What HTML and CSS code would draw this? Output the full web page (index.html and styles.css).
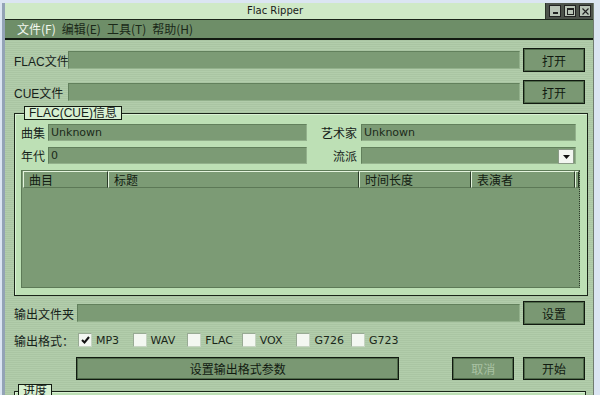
FILE: index.html
```html
<!DOCTYPE html>
<html>

<head>
  <title>Flac Ripper</title>
  <link rel="stylesheet" href="styles.css">
</head>

<body>
  <div class="window">
    <div class="titlebar">
      <div class="title">Flac Ripper</div>
      <div class="caption">
        <span class="cap-btn"><svg width="9" height="9" viewBox="0 0 9 9"><rect x="2" y="5" width="5" height="2" fill="#222"/></svg></span>
        <span class="cap-btn"><svg width="9" height="9" viewBox="0 0 9 9"><rect x="1.5" y="1.5" width="6" height="6" fill="none" stroke="#222" stroke-width="1"/><rect x="1.5" y="1.5" width="6" height="1.5" fill="#222"/></svg></span>
        <span class="cap-btn"><svg width="9" height="9" viewBox="0 0 9 9"><path d="M1.5 1.5 L7.5 7.5 M7.5 1.5 L1.5 7.5" stroke="#222" stroke-width="1.2"/></svg></span>
      </div>
    </div>

    <div class="menubar">
      <span class="menu-item active">文件(F)</span>
      <span class="menu-item">编辑(E)</span>
      <span class="menu-item">工具(T)</span>
      <span class="menu-item">帮助(H)</span>
    </div>

    <div class="client">
      <div class="row">
        <span class="lbl lbl-file">FLAC文件</span>
        <div class="field"></div>
        <button class="btn">打开</button>
      </div>

      <div class="row row-gap">
        <span class="lbl lbl-file">CUE文件</span>
        <div class="field"></div>
        <button class="btn">打开</button>
      </div>

      <fieldset class="group">
        <legend class="group-title">FLAC(CUE)信息</legend>
        <div class="info-grid">
          <span class="info-lbl">曲集</span>
          <div class="field small">Unknown</div>
          <span class="info-lbl right">艺术家</span>
          <div class="field small">Unknown</div>

          <span class="info-lbl">年代</span>
          <div class="field small">0</div>
          <span class="info-lbl right">流派</span>
          <div class="field small combo">
            <span class="combo-btn"><svg width="7" height="4" viewBox="0 0 7 4"><path d="M0 0 L7 0 L3.5 4 Z" fill="#111"/></svg></span>
          </div>
        </div>

        <div class="list">
          <div class="list-head">
            <span class="col col-1">曲目</span>
            <span class="col col-2">标题</span>
            <span class="col col-3">时间长度</span>
            <span class="col col-4">表演者</span>
            <span class="col col-5"></span>
          </div>
        </div>
      </fieldset>

      <div class="row row-out">
        <span class="lbl lbl-out">输出文件夹</span>
        <div class="field"></div>
        <button class="btn">设置</button>
      </div>

      <div class="formats">
        <span class="lbl lbl-fmt">输出格式：</span>
        <span class="fmt"><span class="check checked"><svg width="9" height="8" viewBox="0 0 9 8"><path d="M1 4 L3.5 6.5 L8 1" fill="none" stroke="#111" stroke-width="2"/></svg></span>MP3</span>
        <span class="fmt"><span class="check"></span>WAV</span>
        <span class="fmt"><span class="check"></span>FLAC</span>
        <span class="fmt"><span class="check"></span>VOX</span>
        <span class="fmt"><span class="check"></span>G726</span>
        <span class="fmt"><span class="check"></span>G723</span>
      </div>

      <div class="actions">
        <button class="btn btn-wide">设置输出格式参数</button>
        <button class="btn btn-cancel" disabled>取消</button>
        <button class="btn btn-start">开始</button>
      </div>

      <fieldset class="group progress">
        <legend class="group-title">进度</legend>
      </fieldset>
    </div>
  </div>
</body>

</html>
```

FILE: styles.css
```css
body{
    margin: 0;
    background-color: #dbe5f2;
    font-family: "Liberation Sans", "Noto Sans CJK SC", sans-serif;
    font-size: 12px;
    color: #16221a;
    overflow: hidden;
}

.window{
    margin-left: 2px;
    margin-top: 3px;
    width: 588px;
    height: 392px;
    border-left: 3px solid #93a3b6;
    border-right: 1px solid #707c70;
    background: repeating-linear-gradient(#b2cdab 0 1px, #aac5a3 1px 2px);
    overflow: hidden;
}

.titlebar{
    display: flex;
    height: 16px;
    border-bottom: 1px solid #1c261b;
}

.title{
    flex: 1;
    background-color: #cfe9c7;
    border-right: 1px solid #2a3328;
    text-align: center;
    font-family: "DejaVu Sans", sans-serif;
    font-size: 10px;
    line-height: 16px;
    color: #1a1a1a;
}

.caption{
    display: flex;
    align-items: center;
    gap: 3px;
    width: 44px;
    padding-left: 3px;
    background-color: #4d534b;
}

.cap-btn{
    display: flex;
    justify-content: center;
    align-items: center;
    width: 10px;
    height: 10px;
    background-color: #b9c4b6;
    border: 1px solid #222;
}

.menubar{
    display: flex;
    align-items: center;
    height: 18px;
    padding-left: 12px;
    background-color: #6e8e68;
    border-bottom: 2px solid #121a11;
}

.menu-item{
    margin-right: 6px;
    color: #1a2818;
    font-family: "Noto Sans CJK SC", sans-serif;
    font-size: 12px;
    line-height: 16px;
}

.menu-item.active{
    color: #f2f8ef;
}

.client{
    padding: 8px 7px 0 9px;
}

.row{
    display: flex;
    align-items: center;
    height: 24px;
}

.row-gap{
    margin-top: 8px;
}

.lbl{
    font-family: "Liberation Sans", "Noto Sans CJK SC", sans-serif;
    white-space: nowrap;
}

.lbl-file{
    width: 54px;
}

.lbl-out{
    width: 63px;
}

.lbl-fmt{
    width: 64px;
}

.field{
    flex: 1;
    height: 16px;
    background-color: #7c9b75;
    border: 1px solid;
    border-color: #62805c #93b18c #93b18c #62805c;
    padding-left: 2px;
    line-height: 16px;
    color: #1b2a1a;
    font-family: "DejaVu Sans", sans-serif;
    font-size: 11px;
}

.btn{
    width: 62px;
    height: 24px;
    margin-left: 3px;
    margin-right: 1px;
    padding: 0;
    background-color: #7a9873;
    border: 1px solid #111a10;
    box-shadow: inset 0 0 0 1px #4f6a4a;
    color: #111a10;
    font-family: "Noto Sans CJK SC", sans-serif;
    font-size: 12px;
}

.group{
    margin: 2px 0 0 0;
    padding: 4px 8px 7px 6px;
    background-color: #bde0b5;
    border: 1px solid #1a2519;
    box-shadow: inset 1px 1px 0 #daf2d4;
}

.group-title{
    margin-left: 3px;
    padding: 0 4px;
    height: 12px;
    line-height: 12px;
    background-color: #d7f0d1;
    border: 1px solid #121a11;
    font-family: "Liberation Sans", "Noto Sans CJK SC", sans-serif;
    font-size: 12px;
}

.info-grid{
    display: grid;
    grid-template-columns: 27px 259px 54px 215px;
    grid-auto-rows: 17px;
    row-gap: 6px;
}

.info-lbl{
    line-height: 17px;
    font-family: "Noto Sans CJK SC", sans-serif;
}

.info-lbl.right{
    text-align: right;
    padding-right: 4px;
}

.field.small{
    height: 15px;
    line-height: 15px;
}

.combo{
    display: flex;
    justify-content: flex-end;
    padding-right: 1px;
}

.combo-btn{
    display: flex;
    justify-content: center;
    align-items: center;
    width: 14px;
    height: 13px;
    margin-top: 1px;
    background-color: #f2f6f0;
    border: 1px solid #8a9a86;
}

.list{
    height: 116px;
    margin-top: 6px;
    margin-right: -1px;
    background-color: #7c9b75;
    border: 1px solid #5d7a57;
    border-right: 1px dotted #2c3a2a;
}

.list-head{
    display: flex;
    height: 17px;
    padding-left: 1px;
}

.col{
    height: 15px;
    padding-left: 5px;
    line-height: 15px;
    border-top: 1px solid #e4f4de;
    border-left: 1px solid #e4f4de;
    border-right: 1px solid #2a3a28;
    border-bottom: 1px solid #5c7856;
    font-family: "Noto Sans CJK SC", sans-serif;
    color: #121c11;
}

.col-1{
    width: 78px;
}

.col-2{
    width: 244px;
}

.col-3{
    width: 105px;
}

.col-4{
    width: 97px;
}

.col-5{
    width: 2px;
    padding-left: 0;
}

.row-out{
    margin-top: 5px;
}

.formats{
    display: flex;
    align-items: center;
    height: 16px;
    margin-top: 7px;
}

.fmt{
    display: flex;
    align-items: center;
    width: 54.6px;
    font-family: "DejaVu Sans", sans-serif;
    font-size: 11px;
    color: #1a2719;
}

.check{
    display: flex;
    justify-content: center;
    align-items: center;
    width: 12px;
    height: 12px;
    margin-right: 4px;
    background-color: #f3f7f1;
    border: 1px solid #c6d4c2;
    border-top-color: #98aa94;
    border-left-color: #98aa94;
}

.actions{
    display: flex;
    margin-top: 9px;
    margin-left: 62px;
}

.btn-wide{
    width: 324px;
    height: 23px;
    margin: 0;
}

.btn-cancel{
    height: 23px;
    margin-left: 53px;
    color: #a9c2a3;
}

.btn-start{
    height: 23px;
    margin-left: 8px;
}

.progress{
    height: 40px;
    margin-top: 4px;
    padding: 0;
}
```
